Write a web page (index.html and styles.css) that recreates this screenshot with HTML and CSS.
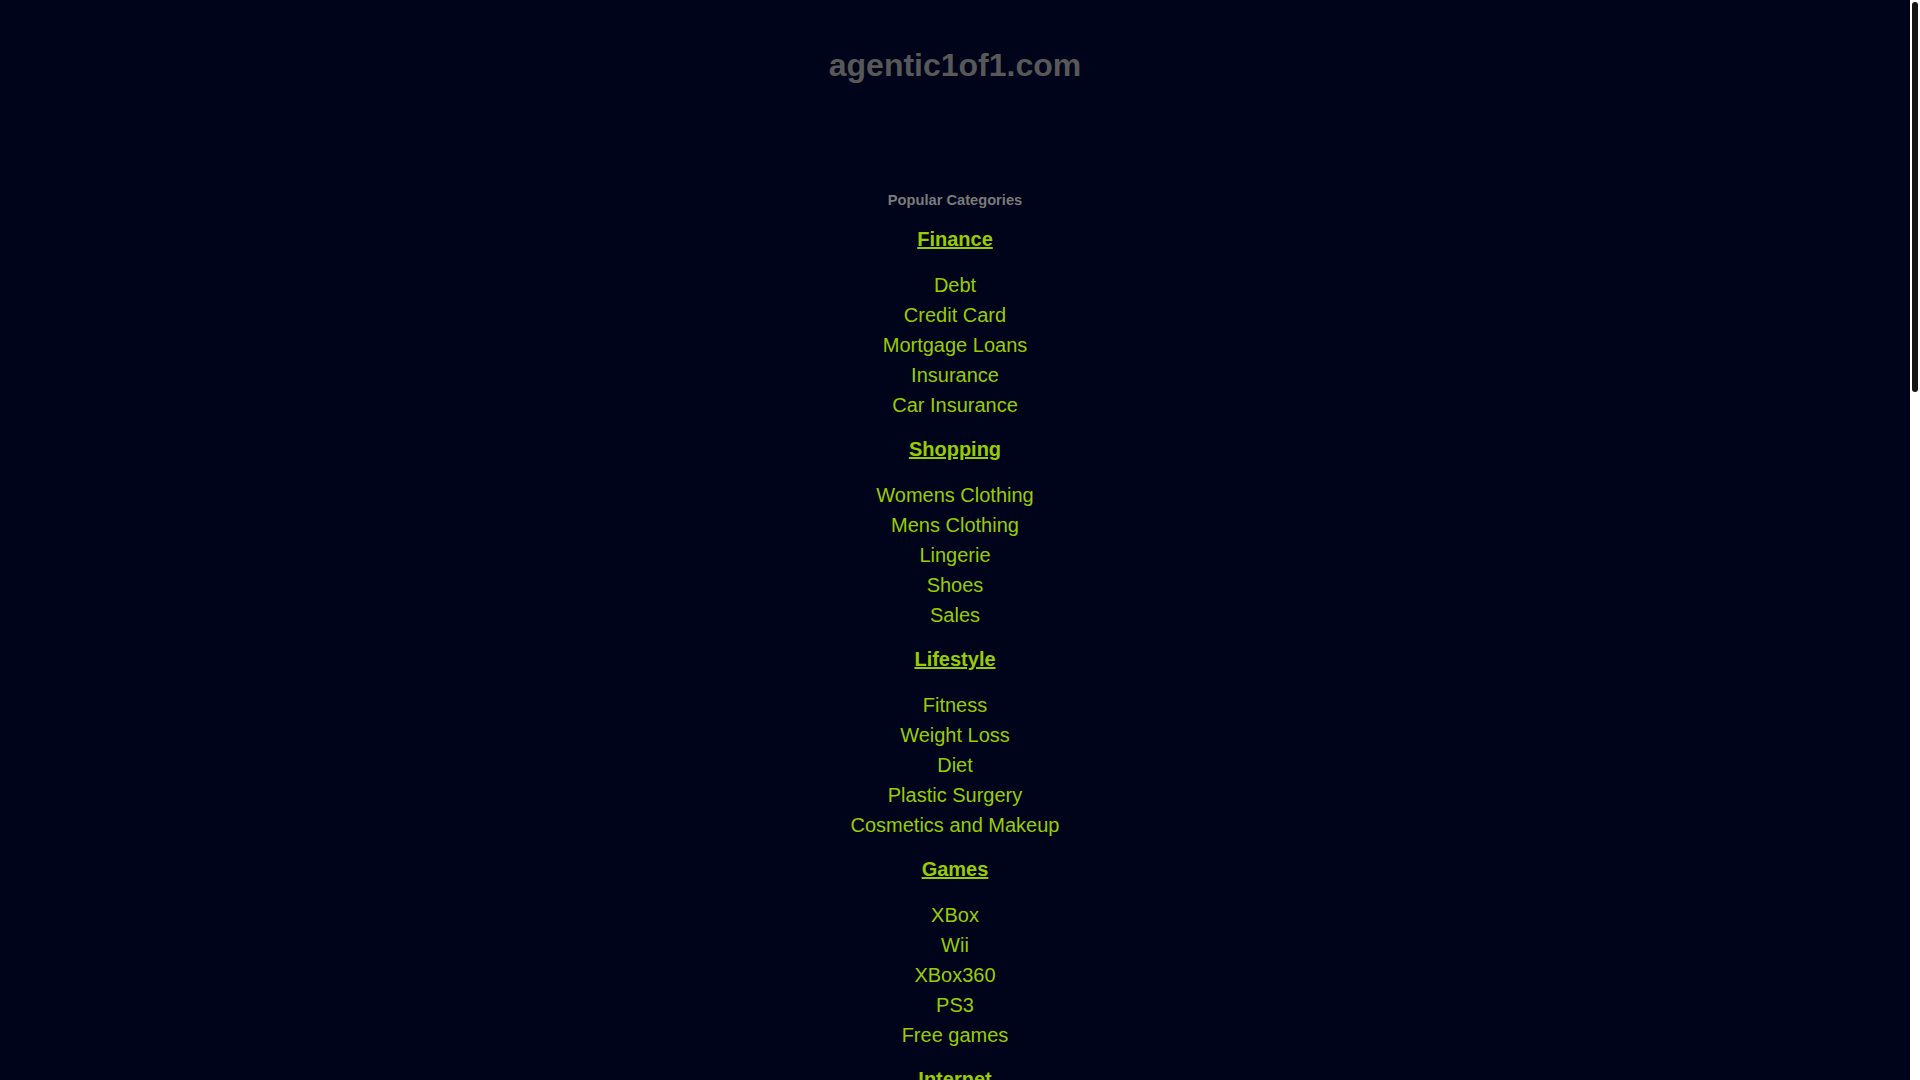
FILE: index.html
```html
<!DOCTYPE html>
<html lang="en">
<head>
<meta charset="utf-8">
<title>agentic1of1.com</title>
<link rel="stylesheet" href="styles.css">
</head>
<body>
<div class="page">
  <header class="masthead">
    <h1 class="site-title">agentic1of1.com</h1>
  </header>
  <main class="categories">
    <h2 class="categories-title">Popular Categories</h2>

    <section class="cat">
      <h3 class="cat-head"><a href="#">Finance</a></h3>
      <ul class="cat-list">
        <li><a href="#">Debt</a></li>
        <li><a href="#">Credit Card</a></li>
        <li><a href="#">Mortgage Loans</a></li>
        <li><a href="#">Insurance</a></li>
        <li><a href="#">Car Insurance</a></li>
      </ul>
    </section>

    <section class="cat">
      <h3 class="cat-head"><a href="#">Shopping</a></h3>
      <ul class="cat-list">
        <li><a href="#">Womens Clothing</a></li>
        <li><a href="#">Mens Clothing</a></li>
        <li><a href="#">Lingerie</a></li>
        <li><a href="#">Shoes</a></li>
        <li><a href="#">Sales</a></li>
      </ul>
    </section>

    <section class="cat">
      <h3 class="cat-head"><a href="#">Lifestyle</a></h3>
      <ul class="cat-list">
        <li><a href="#">Fitness</a></li>
        <li><a href="#">Weight Loss</a></li>
        <li><a href="#">Diet</a></li>
        <li><a href="#">Plastic Surgery</a></li>
        <li><a href="#">Cosmetics and Makeup</a></li>
      </ul>
    </section>

    <section class="cat">
      <h3 class="cat-head"><a href="#">Games</a></h3>
      <ul class="cat-list">
        <li><a href="#">XBox</a></li>
        <li><a href="#">Wii</a></li>
        <li><a href="#">XBox360</a></li>
        <li><a href="#">PS3</a></li>
        <li><a href="#">Free games</a></li>
      </ul>
    </section>

    <section class="cat">
      <h3 class="cat-head"><a href="#">Internet</a></h3>
    </section>
  </main>
</div>
<div class="scrollbar" aria-hidden="true"><div class="scrollbar-thumb"></div></div>
</body>
</html>
```

FILE: styles.css
```css
html {
  background: #00041a;
  overflow: hidden;
}
body {
  margin: 0;
  height: 1080px;
  overflow: hidden;
  background: #00041a;
  font-family: "Liberation Sans", Arial, sans-serif;
}
.page {
  margin-right: 10px;
  text-align: center;
}
.masthead {
  padding-top: 47px;
}
.site-title {
  margin: 0;
  font-size: 32px;
  font-weight: bold;
  line-height: normal;
  color: #585858;
}
.categories {
  padding-top: 108px;
}
.categories-title {
  margin: 0 0 16px;
  font-size: 14.67px;
  line-height: normal;
  font-weight: bold;
  color: #7a7a7a;
}
.cat {
  margin-bottom: 14px;
}
.cat-head {
  margin: 0 0 16px;
  font-size: 20px;
  line-height: 30px;
  font-weight: bold;
}
.cat-head a {
  color: #99cc00;
  text-decoration: underline;
}
.cat-list {
  list-style: none;
  margin: 0;
  padding: 0;
}
.cat-list li {
  font-size: 20px;
  line-height: 30px;
}
.cat-list a {
  color: #99cc00;
  text-decoration: none;
}
.scrollbar {
  position: fixed;
  top: 0;
  right: 0;
  width: 10px;
  height: 100%;
  background: #ffffff;
}
.scrollbar-thumb {
  margin: 2px 2px 0 2px;
  height: 390px;
  background: #151515;
  border-radius: 3px;
}
```
